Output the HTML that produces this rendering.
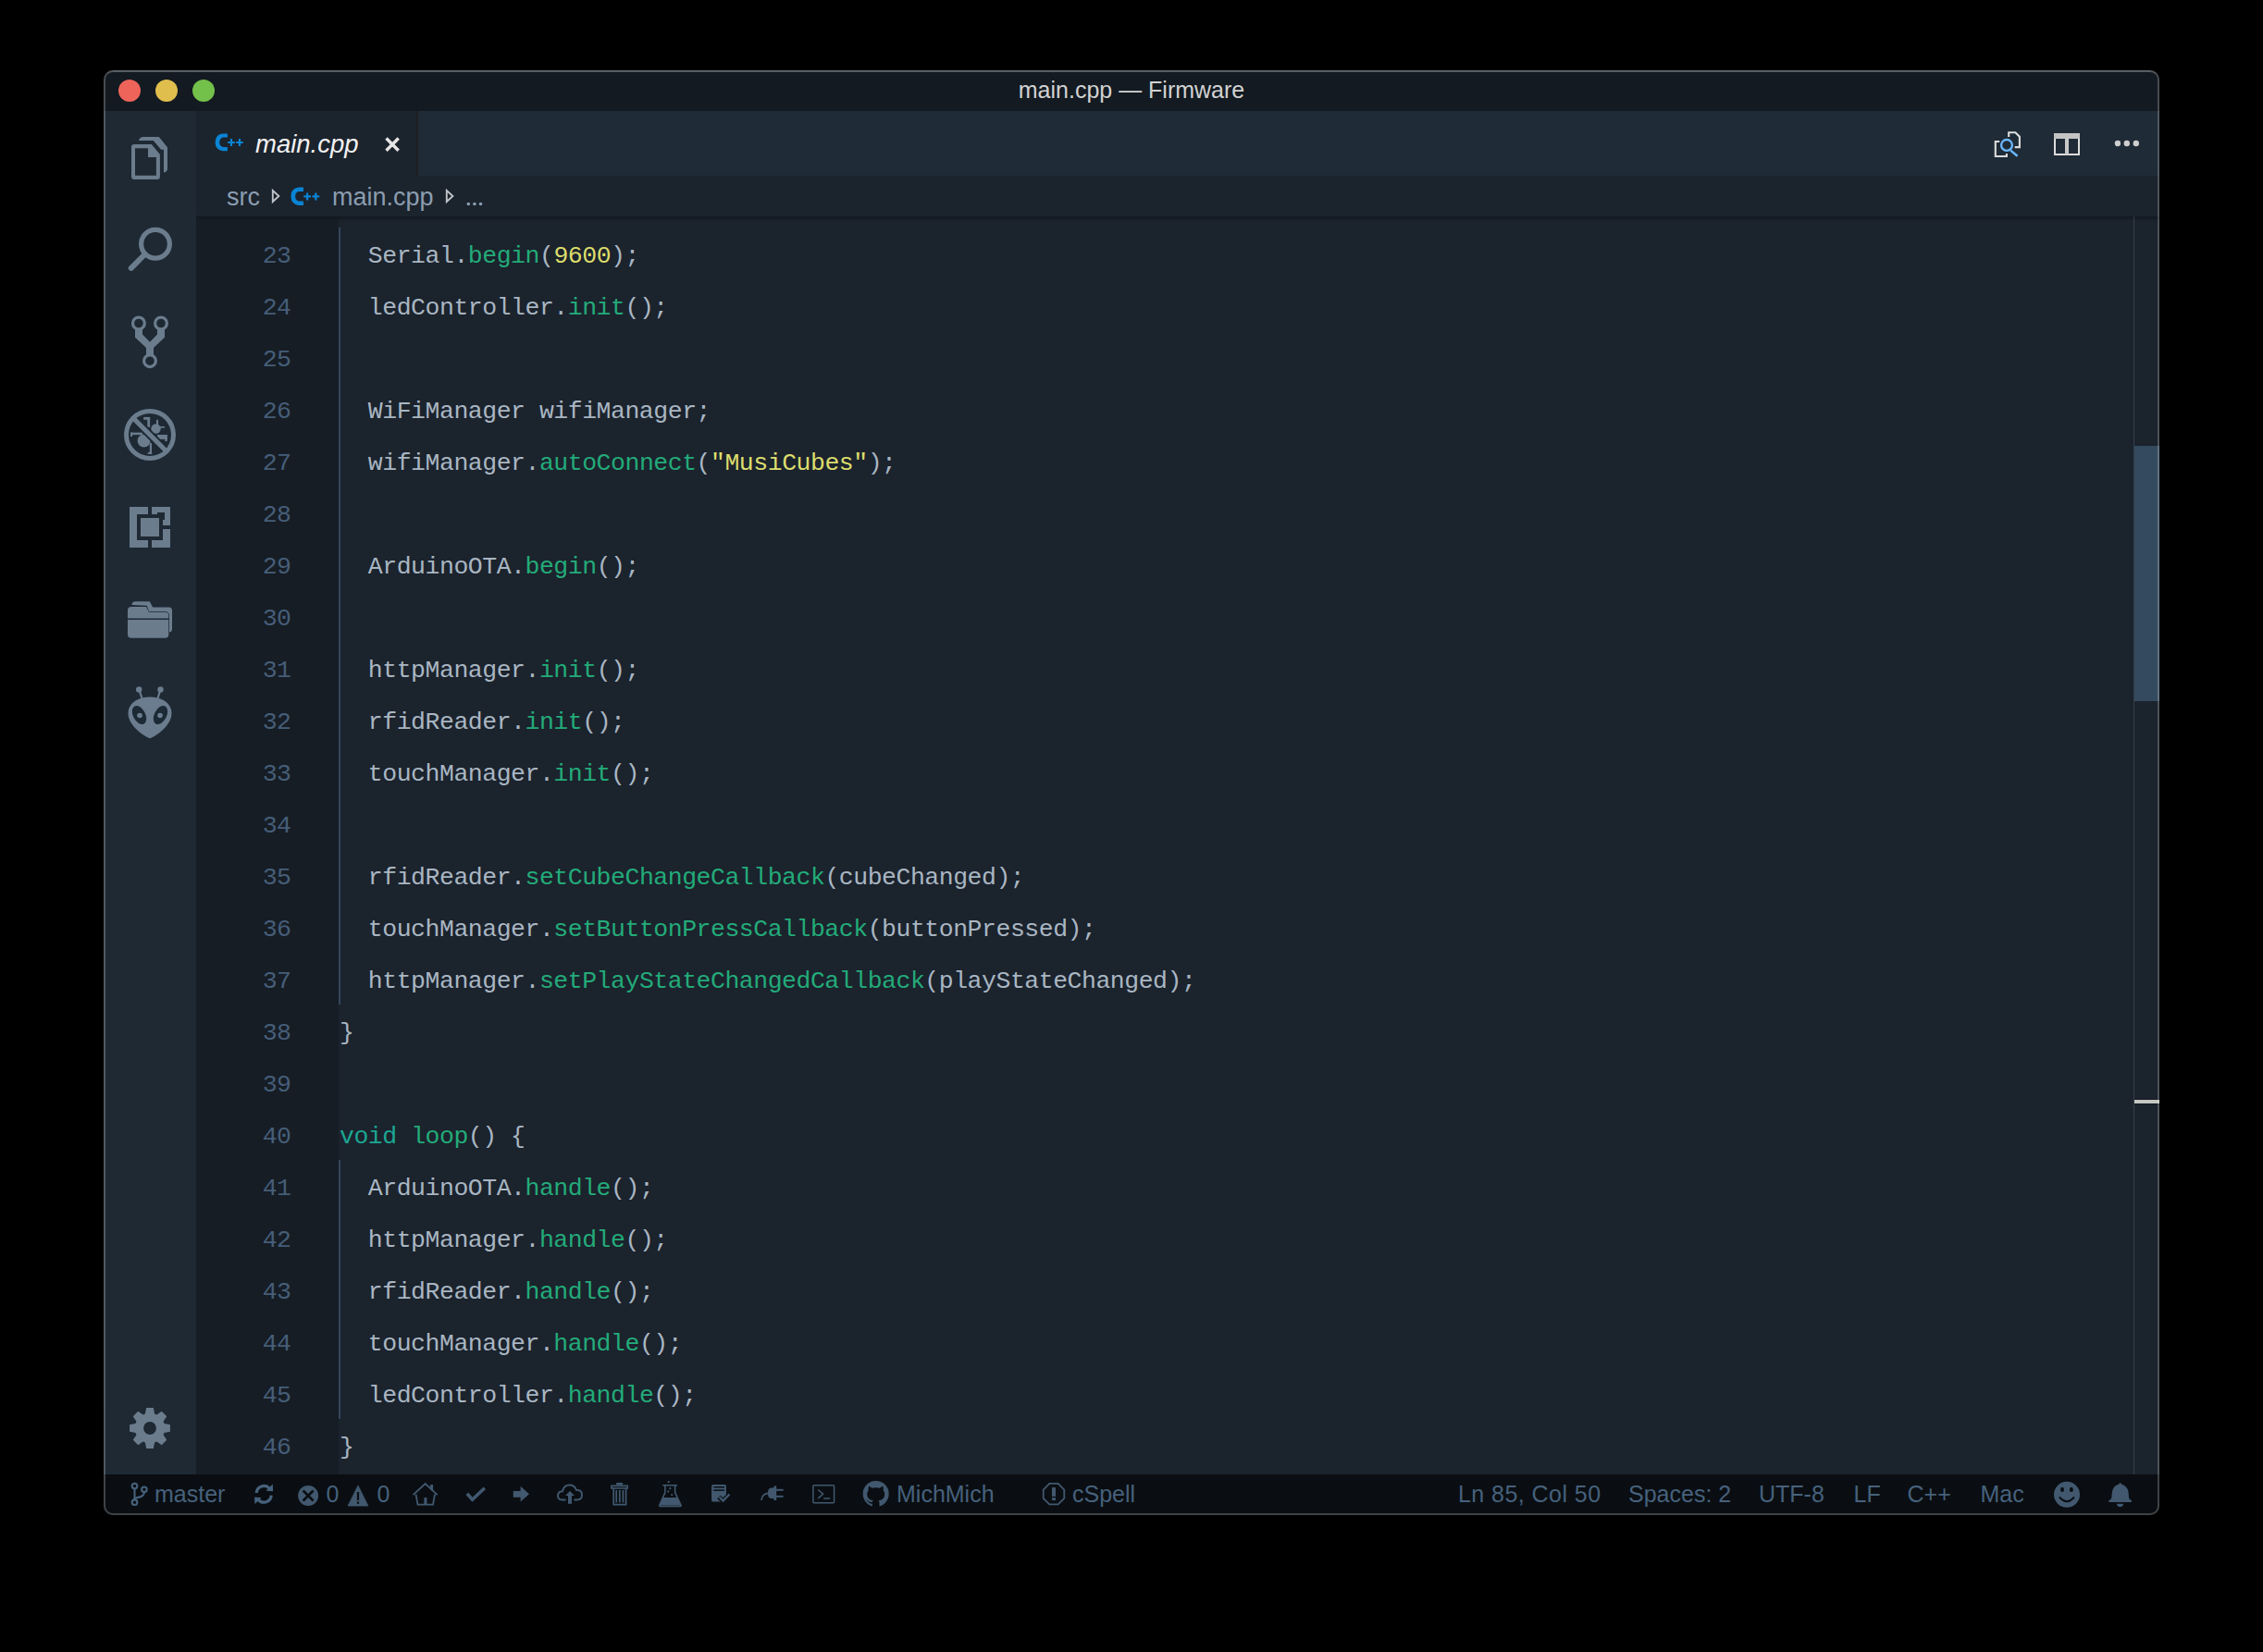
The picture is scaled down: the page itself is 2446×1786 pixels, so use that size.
<!DOCTYPE html>
<html><head><meta charset="utf-8">
<style>
*{margin:0;padding:0;box-sizing:border-box}
html,body{width:2446px;height:1786px;background:#000;overflow:hidden}
body{position:relative;font-family:"Liberation Sans",sans-serif}
.a{position:absolute}
.code{font-family:"Liberation Mono",monospace;font-size:26.5px;letter-spacing:-0.48px;white-space:pre;color:#a9b6c2;line-height:56px}
.ln{font-family:"Liberation Mono",monospace;font-size:26.5px;letter-spacing:-0.48px;color:#465e78;line-height:56px;text-align:right;white-space:pre}
.m{color:#23ab79}.y{color:#dcdd6c}.k{color:#1ca692}
.t{white-space:pre;line-height:1}
</style></head><body>

<div class="a" style="left:112px;top:76px;width:2222px;height:1562px;border-radius:10px;overflow:hidden"><div class="a" style="left:-112px;top:-76px;width:2446px;height:1786px">
<div class="a" style="left:112px;top:76px;width:2222px;height:1562px;background:#1b232d"></div>
<div class="a" style="left:112px;top:76px;width:2222px;height:44px;background:#131a21"></div>
<div class="a" style="left:112px;top:120px;width:100px;height:1474px;background:#1e2934"></div>
<div class="a" style="left:212px;top:120px;width:2122px;height:70px;background:#1f2b37"></div>
<div class="a" style="left:212px;top:120px;width:238px;height:70px;background:#1b232d"></div>
<div class="a" style="left:450px;top:120px;width:2px;height:70px;background:#1f1e22"></div>
<div class="a" style="left:212px;top:190px;width:2122px;height:44px;background:#1b232d"></div>
<div class="a" style="left:212px;top:234px;width:154px;height:1360px;background:#161d25"></div>
<div class="a" style="left:212px;top:234px;width:2122px;height:5px;background:linear-gradient(#12181f,rgba(18,24,31,0))"></div>
<div class="a" style="left:2306px;top:234px;width:1px;height:1360px;background:#353f4a"></div>
<div class="a" style="left:2307px;top:482px;width:27px;height:276px;background:#344a5e"></div>
<div class="a" style="left:2307px;top:1188px;width:27px;height:6px;background:#0f1720"></div>
<div class="a" style="left:2307px;top:1189px;width:27px;height:4px;background:#c4c6c2"></div>
<div class="a" style="left:112px;top:1594px;width:2222px;height:44px;background:#0a0e12"></div>
</div></div>
<div class="a" style="left:112px;top:76px;width:2222px;height:1562px;border-radius:10px;border:2px solid rgba(255,255,255,0.22);border-top-color:rgba(255,255,255,0.27)"></div>
<div class="a" style="left:122px;top:76px;width:2202px;height:1px;background:rgba(255,255,255,0.12)"></div>
<div class="a" style="left:128px;top:86px;width:24px;height:24px;border-radius:50%;background:#ee645a"></div>
<div class="a" style="left:168px;top:86px;width:24px;height:24px;border-radius:50%;background:#e0be4e"></div>
<div class="a" style="left:208px;top:86px;width:24px;height:24px;border-radius:50%;background:#73c04a"></div>
<div class="a t" id="ttl" style="left:0;width:2446px;text-align:center;padding-left:0px;top:85px;font-size:25px;color:#d2d2d2">main.cpp — Firmware</div>
<div class="a t" id="tab" style="left:276px;top:142px;font-size:27.5px;font-style:italic;color:#f2f2f2">main.cpp</div>
<div class="a t" id="bc1" style="left:245px;top:200px;font-size:27px;color:#8b9db0">src</div>
<div class="a t" id="bc2" style="left:359px;top:200px;font-size:27px;color:#8b9db0">main.cpp</div>
<div class="a ln" style="left:212px;top:249px;width:102.5px">23
24
25
26
27
28
29
30
31
32
33
34
35
36
37
38
39
40
41
42
43
44
45
46</div>
<div class="a code" style="left:367px;top:249px">  Serial.<span class="m">begin</span>(<span class="y">9600</span>);
  ledController.<span class="m">init</span>();

  WiFiManager wifiManager;
  wifiManager.<span class="m">autoConnect</span>(<span class="y">"MusiCubes"</span>);

  ArduinoOTA.<span class="m">begin</span>();

  httpManager.<span class="m">init</span>();
  rfidReader.<span class="m">init</span>();
  touchManager.<span class="m">init</span>();

  rfidReader.<span class="m">setCubeChangeCallback</span>(cubeChanged);
  touchManager.<span class="m">setButtonPressCallback</span>(buttonPressed);
  httpManager.<span class="m">setPlayStateChangedCallback</span>(playStateChanged);
}

<span class="k">void</span> <span class="m">loop</span>() {
  ArduinoOTA.<span class="m">handle</span>();
  httpManager.<span class="m">handle</span>();
  rfidReader.<span class="m">handle</span>();
  touchManager.<span class="m">handle</span>();
  ledController.<span class="m">handle</span>();
}</div>
<div class="a" style="left:366px;top:246px;width:2px;height:840px;background:#34465a"></div>
<div class="a" style="left:366px;top:1254px;width:2px;height:280px;background:#34465a"></div>
<div class="a t" id="s_master" style="left:167px;top:1603px;font-size:25px;color:#46617c">master</div>
<div class="a t" id="s_0a" style="left:352.5px;top:1603px;font-size:25px;color:#46617c">0</div>
<div class="a t" id="s_0b" style="left:407.5px;top:1603px;font-size:25px;color:#46617c">0</div>
<div class="a t" id="s_mich" style="left:969px;top:1603px;font-size:25px;color:#46617c">MichMich</div>
<div class="a t" id="s_cspell" style="left:1159px;top:1603px;font-size:25px;color:#46617c">cSpell</div>
<div class="a t" style="left:1576px;top:1603px;font-size:25px;letter-spacing:0.45px;color:#46617c">Ln 85, Col 50</div>
<div class="a t" id="s_sp" style="left:1760px;top:1603px;font-size:25px;color:#46617c">Spaces: 2</div>
<div class="a t" id="s_utf" style="left:1901px;top:1603px;font-size:25px;color:#46617c">UTF-8</div>
<div class="a t" id="s_lf" style="left:2003.5px;top:1603px;font-size:25px;color:#46617c">LF</div>
<div class="a t" id="s_cpp" style="left:2061.5px;top:1603px;font-size:25px;color:#46617c">C++</div>
<div class="a t" id="s_mac" style="left:2140.5px;top:1603px;font-size:25px;color:#46617c">Mac</div>
<svg class="a" style="left:0;top:0" width="2446" height="1786" viewBox="0 0 2446 1786"><path fill="#6b7c8d" fill-rule="evenodd" d="M145,156 H163.8 L172.9,166.9 V191 Q172.9,194 169.9,194 H145 Q142,194 142,191 V159 Q142,156 145,156 Z M146,160.2 V189.8 H168.9 V170 H160 V160.2 Z"/>
<path fill="#6b7c8d" d="M150,152 Q151,148 155,148 H171.8 L181,159.3 V182 Q181,186 177,186.5 V161.8 H174.1 L165.8,152 Z"/>
<circle cx="168" cy="263.8" r="15.4" fill="none" stroke="#6b7c8d" stroke-width="5.2"/>
<line x1="156" y1="275.5" x2="141.8" y2="289.8" stroke="#6b7c8d" stroke-width="6" stroke-linecap="round"/>
<path fill="#6b7c8d" d="M146,355 H154 V361.6 L162,369.8 L170,361.6 V355 H178 V364.8 L166,376 V384 H158 V376 L146,364.8 Z"/>
<circle cx="149.9" cy="349.5" r="6.4" fill="#1e2934" stroke="#6b7c8d" stroke-width="3.2"/>
<circle cx="174" cy="349.5" r="6.4" fill="#1e2934" stroke="#6b7c8d" stroke-width="3.2"/>
<circle cx="162" cy="390.2" r="6.4" fill="#1e2934" stroke="#6b7c8d" stroke-width="3.2"/>
<g>
<circle cx="162" cy="470" r="25.5" fill="none" stroke="#6b7c8d" stroke-width="5"/>
<circle cx="155.6" cy="476.5" r="7" fill="#6b7c8d"/>
<circle cx="168.5" cy="463.5" r="5.2" fill="#6b7c8d"/>
<rect x="141" y="467.6" width="13" height="2.5" fill="#6b7c8d"/>
<rect x="141" y="467.6" width="2" height="4.4" fill="#6b7c8d"/>
<rect x="161.8" y="479" width="2.2" height="12" fill="#6b7c8d"/>
<rect x="159.8" y="488.9" width="4.4" height="2" fill="#6b7c8d"/>
<rect x="159.3" y="451" width="2.8" height="10.8" fill="#6b7c8d"/>
<rect x="155.2" y="450.9" width="6.9" height="2.9" fill="#6b7c8d"/>
<rect x="169" y="453.8" width="2" height="7" fill="#6b7c8d"/>
<rect x="172" y="461" width="6" height="1.6" fill="#6b7c8d"/>
<rect x="170" y="470" width="10.7" height="4.9" fill="#6b7c8d"/>
<rect x="178.2" y="470" width="2.5" height="7" fill="#6b7c8d"/>
</g>
<clipPath id="dbgclip"><circle cx="162" cy="470" r="23"/></clipPath>
<line x1="140" y1="448" x2="184" y2="492" stroke="#1e2934" stroke-width="9" clip-path="url(#dbgclip)"/>
<line x1="142.5" y1="450.5" x2="181.5" y2="489.5" stroke="#6b7c8d" stroke-width="5.2"/>
<path fill="#6b7c8d" d="M140,548 H160 V556 H148 V584 H160 V592 H140 Z"/>
<path fill="#6b7c8d" d="M164,548 H184 V568 H176 V562 H178 V554 H170 V556 H164 Z"/>
<path fill="#6b7c8d" d="M176,572 H184 V592 H164 V584 H176 Z"/>
<rect x="152" y="560" width="20" height="20" fill="#6b7c8d"/>
<path fill="#6b7c8d" d="M142.5,654 Q142.5,650.2 146.5,650.2 H161.8 L165.1,656.5 H182.5 Q186,656.5 186,660 V680 Q186,683.4 183,683.4 V666 Q183,661 178,661 H161 L158.7,654.8 Z"/>
<path fill="#6b7c8d" d="M138,660 Q138,656 142,656 H158 L161,661.8 H178.5 Q182.3,661.8 182.3,666 V668.6 H138 Z"/>
<path fill="#6b7c8d" d="M138,670 H182.3 V686 Q182.3,689.8 178.5,689.8 H141.8 Q138,689.8 138,686 Z"/>
<filter id="blur1" x="-20%" y="-20%" width="140%" height="140%"><feGaussianBlur stdDeviation="0.7"/></filter><g filter="url(#blur1)">
<path fill="#6b7c8d" d="M162,753.5 C176,753.5 185.5,761 185.5,771 C185.5,783 172,794 162,798.3 C152,794 138.5,783 138.5,771 C138.5,761 148,753.5 162,753.5 Z"/>
<line x1="150.2" y1="745.4" x2="153.5" y2="755" stroke="#6b7c8d" stroke-width="2.2"/>
<line x1="173.5" y1="745.4" x2="170.5" y2="755" stroke="#6b7c8d" stroke-width="2.2"/>
<circle cx="150.2" cy="745.4" r="3.2" fill="#6b7c8d"/>
<circle cx="173.5" cy="745.4" r="3.2" fill="#6b7c8d"/>
<ellipse cx="150.5" cy="773" rx="6.6" ry="10.8" transform="rotate(-28 150.5 773)" fill="#1e2934"/>
<ellipse cx="173.5" cy="773" rx="6.6" ry="10.8" transform="rotate(28 173.5 773)" fill="#1e2934"/>
<circle cx="151" cy="773.5" r="2.8" fill="#6b7c8d"/>
<circle cx="173" cy="773.5" r="2.8" fill="#6b7c8d"/>
</g>
<path fill="#6b7c8d" fill-rule="evenodd" d="M156.90,1528.50 L158.15,1522.10 L165.85,1522.10 L167.10,1528.50 L169.35,1529.43 L174.76,1525.79 L180.21,1531.24 L176.57,1536.65 L177.50,1538.90 L183.90,1540.15 L183.90,1547.85 L177.50,1549.10 L176.57,1551.35 L180.21,1556.76 L174.76,1562.21 L169.35,1558.57 L167.10,1559.50 L165.85,1565.90 L158.15,1565.90 L156.90,1559.50 L154.65,1558.57 L149.24,1562.21 L143.79,1556.76 L147.43,1551.35 L146.50,1549.10 L140.10,1547.85 L140.10,1540.15 L146.50,1538.90 L147.43,1536.65 L143.79,1531.24 L149.24,1525.79 L154.65,1529.43 Z M168.9,1544 A6.9,6.9 0 1 0 155.1,1544 A6.9,6.9 0 1 0 168.9,1544 Z"/>
<g transform="translate(232.7,144.4) scale(1.0)" fill="#0a84d4"><path d="M13.2,0 H8.4 A8.4,8.4 0 0 0 0,8.4 V10.5 A8.4,8.4 0 0 0 8.4,18.9 H13.2 V14.7 H9.2 A4.6,4.6 0 0 1 4.6,10.1 V8.8 A4.6,4.6 0 0 1 9.2,4.2 H13.2 Z"/><path d="M13.5,8.5 H21.1 V10.7 H13.5 Z M16.2,5.7 H18.4 V13.6 H16.2 Z M22.5,8.5 H30.1 V10.7 H22.5 Z M25.2,5.7 H27.4 V13.6 H25.2 Z"/></g>
<g transform="translate(314.5,202.6) scale(1.02)" fill="#0a84d4"><path d="M13.2,0 H8.4 A8.4,8.4 0 0 0 0,8.4 V10.5 A8.4,8.4 0 0 0 8.4,18.9 H13.2 V14.7 H9.2 A4.6,4.6 0 0 1 4.6,10.1 V8.8 A4.6,4.6 0 0 1 9.2,4.2 H13.2 Z"/><path d="M13.5,8.5 H21.1 V10.7 H13.5 Z M16.2,5.7 H18.4 V13.6 H16.2 Z M22.5,8.5 H30.1 V10.7 H22.5 Z M25.2,5.7 H27.4 V13.6 H25.2 Z"/></g>
<path d="M417.5,149.5 L430.7,162.7 M430.7,149.5 L417.5,162.7" stroke="#e6e6e6" stroke-width="3.4"/>
<path d="M294.8,206 L301.40000000000003,212 L294.8,218 Z" fill="none" stroke="#bfc3c7" stroke-width="1.9" stroke-linejoin="miter"/>
<path d="M482.8,206 L489.40000000000003,212 L482.8,218 Z" fill="none" stroke="#bfc3c7" stroke-width="1.9" stroke-linejoin="miter"/>
<circle cx="506.3" cy="220.5" r="1.8" fill="#8b9db0"/>
<circle cx="512.9" cy="220.5" r="1.8" fill="#8b9db0"/>
<circle cx="519.5" cy="220.5" r="1.8" fill="#8b9db0"/>
<path d="M2171.2,148 V143.2 H2178.4 L2182.9,147.7 V159.1 H2177.7" fill="none" stroke="#dcdcdc" stroke-width="2.1"/>
<path d="M2161.2,153 H2156.8 V169 H2168.9 V165.9" fill="none" stroke="#dcdcdc" stroke-width="2.1"/>
<circle cx="2169" cy="156.9" r="5.9" fill="none" stroke="#6cb8ff" stroke-width="2.3"/>
<line x1="2173.2" y1="162.6" x2="2180.6" y2="168.8" stroke="#6cb8ff" stroke-width="2.5"/>
<path d="M2221,145 H2247 V167.1 H2221 Z M2234,150 V167" fill="none" stroke="#dcdcdc" stroke-width="2"/>
<rect x="2220" y="144" width="28" height="6" fill="#c4c4c4"/>
<rect x="2232" y="149" width="4" height="18" fill="#c8c8c8"/>
<circle cx="2288.9" cy="155" r="3.2" fill="#cfcfcf"/>
<circle cx="2298.8" cy="155" r="3.2" fill="#cfcfcf"/>
<circle cx="2308.8" cy="155" r="3.2" fill="#cfcfcf"/>
<g fill="none" stroke="#46617c" stroke-width="2.1">
<circle cx="145.5" cy="1606.6" r="2.8"/><circle cx="155.9" cy="1610.3" r="2.8"/><circle cx="145.5" cy="1624.2" r="2.8"/>
<path d="M145.5,1609.4 V1621.4 M155.9,1613.1 Q155.9,1617.6 150.5,1618.6 Q145.5,1619.5 145.5,1621"/>
</g>
<g fill="none" stroke="#46617c" stroke-width="3.2">
<path d="M277.2,1614 A8,8 0 0 1 291.2,1609.3"/><path d="M293.2,1616.6 A8,8 0 0 1 279.2,1621.4"/>
</g>
<path d="M294.8,1604.6 L295.1,1612.2 L287.5,1611.7 Z" fill="#46617c"/>
<path d="M275.4,1626 L275.1,1618.6 L282.7,1619.2 Z" fill="#46617c"/>
<circle cx="333.1" cy="1617" r="11" fill="#41586f"/>
<path d="M327.6,1611.5 L338.6,1622.5 M338.6,1611.5 L327.6,1622.5" stroke="#0a0e12" stroke-width="2.6"/>
<path d="M387,1606 L397.9,1628 H376.1 Z" fill="#41586f" stroke="#41586f" stroke-width="0.8" stroke-linejoin="round"/>
<rect x="385.9" y="1613" width="2.2" height="9" fill="#0a0e12"/><rect x="385.9" y="1623.5" width="2.2" height="2.3" fill="#0a0e12"/>
<path d="M446.5,1616.2 L459.7,1604 L472.7,1616.2 M449.5,1615.5 L451.5,1626.7 H468 L470,1615.5 M459.9,1626.7 V1619.5" fill="none" stroke="#41586f" stroke-width="1.8"/>
<rect x="458.4" y="1619" width="3" height="8" fill="#41586f"/><rect x="465.1" y="1605.1" width="3" height="6" fill="#41586f"/>
<path d="M504.8,1614.8 L510.6,1621.2 L523.8,1608.8" fill="none" stroke="#41586f" stroke-width="3.6"/>
<path d="M554.8,1612.1 H562.6 V1606.8 L572,1615.2 L562.6,1623.6 V1618.8 H554.8 Z" fill="#41586f"/>
<path d="M611.5,1621.5 H607.5 Q603,1621.5 603,1617 Q603,1612.3 608,1612.2 Q609.5,1605.5 615.8,1605.5 Q621,1605.5 622.8,1610.8 Q629,1610.8 629,1616.2 Q629,1621.5 623.5,1621.5 H620.5" fill="none" stroke="#41586f" stroke-width="1.9"/>
<path d="M616,1612.1 L621,1617 H618 V1625.8 H614 V1617 H611 Z" fill="#41586f"/>
<path d="M661,1606.3 H678.2 V1609 H661 Z M663.2,1609.5 V1626.6 H676.6 V1609.5 M666.2,1611 V1624.5 M669.8,1611 V1624.5 M673.4,1611 V1624.5" fill="none" stroke="#41586f" stroke-width="1.7"/>
<rect x="666" y="1602.9" width="7.2" height="2.6" rx="1" fill="#41586f"/>
<path d="M716.2,1605.7 H732 M718.9,1606 V1613.5 L712.8,1627.3 Q712.5,1628.5 714,1628.5 H734.8 Q736.3,1628.5 736,1627.3 L729.6,1613.5 V1606" fill="none" stroke="#41586f" stroke-width="1.6"/>
<path d="M716.7,1618.9 H732 L735.8,1627.6 H713 Z" fill="#41586f"/>
<circle cx="722.7" cy="1602.2" r="1.1" fill="#41586f"/>
<circle cx="724.3" cy="1609.2" r="1.1" fill="#41586f"/>
<circle cx="722.3" cy="1612.4" r="1.1" fill="#41586f"/>
<circle cx="726.2" cy="1616.1" r="1.1" fill="#41586f"/>
<rect x="769.1" y="1605" width="15.8" height="18.5" rx="1.6" fill="#41586f"/>
<rect x="772" y="1607" width="11" height="1.5" fill="#0a0e12"/><rect x="772" y="1610.4" width="11" height="1.5" fill="#0a0e12"/>
<rect x="770.8" y="1607" width="0.8" height="1.5" fill="#0a0e12"/><rect x="770.8" y="1610.4" width="0.8" height="1.5" fill="#0a0e12"/>
<path d="M777,1618.5 L781.5,1622.8 L789.5,1614.8" fill="none" stroke="#0a0e12" stroke-width="5"/>
<path d="M777.5,1618.5 L781.5,1622.5 L788.5,1615.5" fill="none" stroke="#41586f" stroke-width="2.4"/>
<path d="M839.2,1606.4 H836.4 V1608.5 H834 Q829.9,1608.5 829.9,1614.2 Q829.9,1620 834,1620 H836.4 V1622.1 H839.2 Z" fill="#41586f"/>
<rect x="839" y="1609.8" width="7.6" height="2" fill="#41586f"/><rect x="839" y="1616.8" width="7.6" height="2" fill="#41586f"/>
<path d="M831,1614.4 Q823.5,1614.5 823,1622" fill="none" stroke="#41586f" stroke-width="1.6"/>
<rect x="878.9" y="1605.7" width="22.7" height="19" rx="1" fill="none" stroke="#41586f" stroke-width="1.5"/>
<path d="M884.2,1610.5 L889.6,1615.2 L884.2,1619.9 M890.2,1619.9 H897.2" fill="none" stroke="#41586f" stroke-width="1.5"/>
<circle cx="946.7" cy="1615" r="14" fill="#41586f"/>
<path d="M939.2,1606.5 L942.5,1608.8 Q946.7,1607.6 950.9,1608.8 L954.2,1606.5 Q955.3,1609.5 954.8,1611.5 Q956.2,1613 956.2,1615.5 Q956.2,1621.5 949.6,1622.3 Q950.5,1623.3 950.5,1625 V1630 H942.9 V1625.8 Q940,1626 938.5,1623.5 Q937.5,1622.3 936,1621.8 Q937.5,1621.5 938.8,1622.8 Q940,1624.3 942.8,1624 Q943,1623 943.8,1622.3 Q937.2,1621.5 937.2,1615.5 Q937.2,1613 938.6,1611.5 Q938.1,1609.5 939.2,1606.5 Z" fill="#0a0e12"/>
<polygon points="1150.27,1619.87 1143.67,1626.47 1134.33,1626.47 1127.73,1619.87 1127.73,1610.53 1134.33,1603.93 1143.67,1603.93 1150.27,1610.53" fill="none" stroke="#41586f" stroke-width="1.8"/>
<rect x="1137" y="1608.1" width="4" height="9.8" fill="#41586f"/><rect x="1137" y="1619.2" width="4" height="2.9" fill="#41586f"/>
<circle cx="2234" cy="1615.8" r="14" fill="#41586f"/>
<ellipse cx="2229" cy="1610.4" rx="2" ry="2.6" fill="#0a0e12"/><ellipse cx="2238.9" cy="1610.4" rx="2" ry="2.6" fill="#0a0e12"/>
<path d="M2226,1618.5 Q2234,1628 2242,1618.5" fill="none" stroke="#0a0e12" stroke-width="2"/>
<path d="M2291.7,1603 Q2293,1603.5 2293.3,1604.8 Q2299.8,1606.5 2300.6,1614 L2301.2,1620 L2304,1622.4 V1624 H2279.3 V1622.4 L2282.2,1620 L2282.8,1614 Q2283.6,1606.5 2290.1,1604.8 Q2290.4,1603.5 2291.7,1603 Z" fill="#41586f"/>
<path d="M2287.8,1625.7 H2295.2 Q2294.5,1629.1 2291.5,1629.1 Q2288.5,1629.1 2287.8,1625.7 Z" fill="#41586f"/></svg>
</body></html>
